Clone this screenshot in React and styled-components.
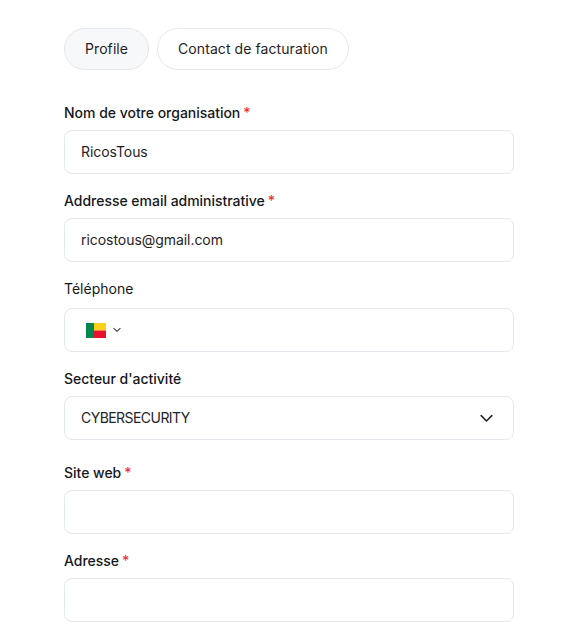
import * as React from "react";
import styled, { createGlobalStyle } from "styled-components";

const GlobalStyle = createGlobalStyle`
  html, body {
    margin: 0;
    padding: 0;
    background: #fff;
  }
  body {
    font-family: "Inter", "Noto Sans", sans-serif;
    color: #1f2328;
  }
`;

const Page = styled.div`
  width: 450px;
  height: 627px;
  overflow: hidden;
  padding: 28px 0 0 64px;
`;

const Tabs = styled.div`
  display: flex;
  gap: 8px;
  margin-bottom: 33px;
`;

const Tab = styled.button`
  height: 42px;
  padding: 0 20px;
  border: 1px solid #e4e7ec;
  border-radius: 21px;
  background: ${(p) => (p.$active ? "#f6f8fa" : "#fff")};
  color: #1f2328;
  font: 400 14px/20px "Inter", sans-serif;
  letter-spacing: 0.08px;
`;

const Field = styled.div`
  display: flex;
  flex-direction: column;
  gap: ${(p) => p.$gap || 7}px;
  margin-bottom: ${(p) => p.$after || 17}px;
`;

const Label = styled.label`
  display: block;
  height: 20px;
  font: ${(p) => (p.$light ? 400 : 500)} 14px/20px "Inter", sans-serif;
  letter-spacing: ${(p) => (p.$light ? "0" : "-0.02px")};
  color: #15181c;
`;

const Required = styled.span`
  margin-left: 3px;
  color: #f5303e;
`;

const Box = styled.div`
  display: flex;
  align-items: center;
  box-sizing: border-box;
  height: 44px;
  padding: 0 18px 0 16px;
  border: 1px solid #e4e7ec;
  border-radius: 8px;
  background: #fff;
  font: 400 14px/20px "Inter", sans-serif;
  letter-spacing: ${(p) => p.$tight || "-0.05px"};
  color: #1f2328;
`;

const Value = styled.span`
  flex: 1;
`;

const FlagWrap = styled.span`
  display: flex;
  align-items: center;
  gap: 6px;
  margin-left: 5px;
`;

function Flag() {
  return (
    <svg width="20" height="15" viewBox="0 0 20 15">
      <rect width="8" height="15" fill="#008751" />
      <rect x="8" width="12" height="7.5" fill="#fcd116" />
      <rect x="8" y="7.5" width="12" height="7.5" fill="#e8112d" />
    </svg>
  );
}

function Chevron({ size, weight, color }) {
  return (
    <svg width={size} height={size} viewBox="0 0 24 24" fill="none" stroke={color} strokeWidth={weight} strokeLinecap="round" strokeLinejoin="round">
      <path d="M4.5 8l7.500 7.500L19.500 8" />
    </svg>
  );
}

export default function App() {
  return (
    <Page>
      <GlobalStyle />
      <Tabs>
        <Tab $active>Profile</Tab>
        <Tab>Contact de facturation</Tab>
      </Tabs>

      <Field $after={17}>
        <Label>Nom de votre organisation<Required>*</Required></Label>
        <Box>RicosTous</Box>
      </Field>

      <Field $after={17}>
        <Label>Addresse email administrative<Required>*</Required></Label>
        <Box>ricostous@gmail.com</Box>
      </Field>

      <Field $after={17} $gap={9}>
        <Label $light>Téléphone</Label>
        <Box>
          <FlagWrap>
            <Flag />
            <Chevron size={10} weight={2.8} color="#4a4f55" />
          </FlagWrap>
        </Box>
      </Field>

      <Field $after={23}>
        <Label>Secteur d'activité</Label>
        <Box $tight="-0.55px">
          <Value>CYBERSECURITY</Value>
          <Chevron size={17} weight={2.2} color="#1f2328" />
        </Box>
      </Field>

      <Field $after={17}>
        <Label>Site web<Required>*</Required></Label>
        <Box />
      </Field>

      <Field $after={0}>
        <Label>Adresse<Required>*</Required></Label>
        <Box />
      </Field>
    </Page>
  );
}
